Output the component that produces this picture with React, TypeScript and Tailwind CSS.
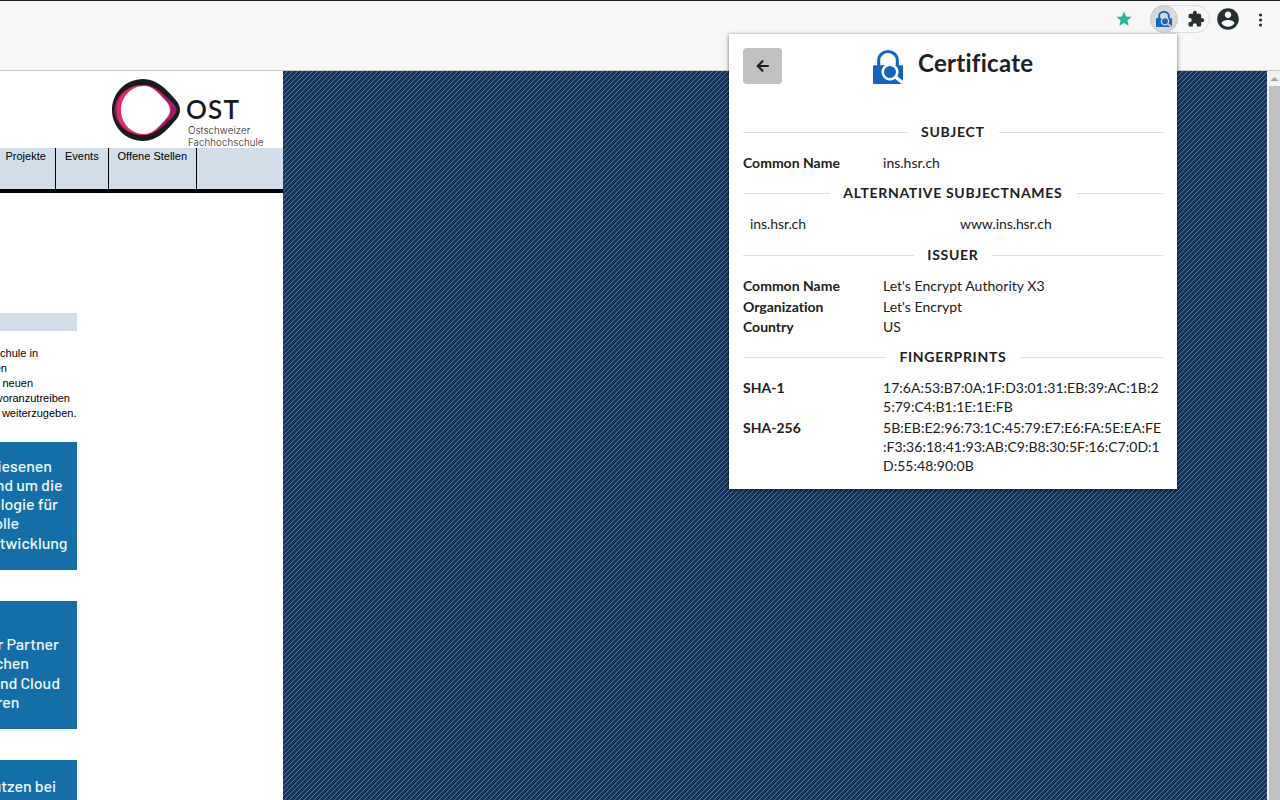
import React from "react";

const ARIAL = "font-['Liberation_Sans',Arial,sans-serif]";

function LockIcon({ className }: { className: string }) {
  return (
    <svg viewBox="0 0 30 34" className={className} fill="none">
      <path d="M5.700 17V10.200a9.300 8.700 0 0 1 18.600 0V17" stroke="#1565c0" strokeWidth="3" />
      <path d="M1 15.200H29a1 1 0 0 1 1 1V34H1a1 1 0 0 1-1-1V16.200a1 1 0 0 1 1-1Z" fill="#1565c0" />
      <circle cx="17" cy="22" r="7.300" stroke="#fff" strokeWidth="2.600" />
      <path d="M22.500 27L30 33" stroke="#fff" strokeWidth="3.400" />
    </svg>
  );
}

function SmallLockIcon() {
  return (
    <svg viewBox="0 0 16 16" className="h-4 w-4" fill="none">
      <path d="M3.200 8V4.800a4.800 4 0 0 1 9.600 0V8" stroke="#1565c0" strokeWidth="1.800" />
      <path d="M0 7.200h16V16H0z" fill="#1565c0" />
      <circle cx="9" cy="10.300" r="3.600" stroke="#d9d9d9" strokeWidth="1.300" />
      <path d="M11.700 12.800L15.500 15.800" stroke="#d9d9d9" strokeWidth="1.500" />
    </svg>
  );
}

function Toolbar() {
  return (
    <header className="flex h-[71px] shrink-0 items-start justify-end border-t border-b border-t-[#1c2022] border-b-[#c9c9c7] bg-[#f7f7f7] pt-1">
      <svg viewBox="0 0 24 24" className="mt-[5px] mr-[17px] h-[18px] w-[18px]" fill="#2db59a">
        <path d="M12 17.270 18.180 21l-1.640-7.030L22 9.240l-7.190-.61L12 2 9.190 8.630 2 9.240l5.460 4.730L5.820 21z" />
      </svg>
      <div className="flex h-7 w-[60px] items-center rounded-full border border-[#dddddd]">
        <div className="-ml-px flex h-7 w-7 items-center justify-center rounded-full border border-[#cbcbcb] bg-[#d9d9d9]">
          <SmallLockIcon />
        </div>
        <svg viewBox="0 0 24 24" className="ml-[9px] h-[18px] w-[18px]" fill="#263033">
          <path d="M20.500 11H19V7c0-1.100-.9-2-2-2h-4V3.500C13 2.120 11.880 1 10.500 1S8 2.120 8 3.500V5H4c-1.100 0-1.990.9-1.990 2v3.800H3.500c1.490 0 2.700 1.210 2.700 2.700s-1.210 2.700-2.700 2.700H2V20c0 1.100.9 2 2 2h3.800v-1.500c0-1.490 1.210-2.700 2.700-2.700 1.490 0 2.700 1.210 2.700 2.700V22H17c1.100 0 2-.9 2-2v-4h1.500c1.380 0 2.500-1.120 2.500-2.500S21.880 11 20.500 11z" />
        </svg>
      </div>
      <svg viewBox="0 0 24 24" className="mt-px ml-[5px] h-[26px] w-[26px]" fill="#263033">
        <path d="M12 2C6.480 2 2 6.480 2 12s4.480 10 10 10 10-4.480 10-10S17.520 2 12 2zm0 3c1.660 0 3 1.340 3 3s-1.340 3-3 3-3-1.340-3-3 1.340-3 3-3zm0 14.200c-2.500 0-4.710-1.280-6-3.220.03-1.990 4-3.080 6-3.080 1.990 0 5.970 1.090 6 3.080-1.290 1.940-3.500 3.220-6 3.220z" />
      </svg>
      <svg viewBox="0 0 4 16" className="mt-[6.500px] mr-[17.500px] ml-[17.500px] h-4 w-1" fill="#263033">
        <circle cx="1.600" cy="3" r="1.600" />
        <circle cx="1.600" cy="8" r="1.600" />
        <circle cx="1.600" cy="13" r="1.600" />
      </svg>
    </header>
  );
}

function OstLogo() {
  return (
    <div className="flex h-[77px] pt-2 pl-[112px]">
      <svg viewBox="0 0 68 62" className="h-[62px] w-[68px] shrink-0">
        <path d="M31 0C13.900 0 0 13.900 0 31S13.900 62 31 62C45 62 54 52 62 43C70 35 70 27 62 19C54 10 45 0 31 0Z" fill="#1a1a1a" />
        <path d="M31 6C15 6 2.500 17 2.500 31S15 56 31 56C43 56 51 48 59 40C66.500 33 66.500 29 59 22C51 14 43 6 31 6Z" fill="#8e1c5f" />
        <path d="M31 6C16 6 4.500 17 4.500 31S16 56 31 56C42 56 47 49 54 41C61 34 61 28 54 21C47 13 42 6 31 6Z" fill="#e22b69" />
        <path d="M57 22C64 29 64 33 57 40" stroke="#b43886" strokeWidth="0.800" fill="none" />
        <path d="M32 7C19 7 9 18 9 31S19 55 32 55C41 55 46 48 53 41C59.500 34 59.500 28 53 21C46 14 41 7 32 7Z" fill="#fff" />
      </svg>
      <div className="pt-[17px] pl-[6px] text-[#1a1a1a]">
        <div className="font-[Lato,sans-serif] text-[26px] leading-[27px] font-semibold tracking-[1.200px]">OST</div>
        <div className="mt-[2px] pl-[2px] font-[Inter,sans-serif] text-[9.700px] leading-[11.500px] font-light tracking-[0.100px] text-[#222]">
          Ostschweizer
          <br />
          Fachhochschule
        </div>
      </div>
    </div>
  );
}

function Nav() {
  return (
    <nav className={`flex h-[45px] border-b-4 border-black bg-[#d1dee9] text-[11px] leading-[17px] text-black ${ARIAL}`}>
      <div className="w-14 border-r border-black pl-[5.500px]">Projekte</div>
      <div className="w-[53px] border-r border-black pl-[9px]">Events</div>
      <div className="w-[88px] border-r border-black pl-[8.500px] whitespace-nowrap">Offene Stellen</div>
    </nav>
  );
}

function Line({ w, children }: { w: string; children: React.ReactNode }) {
  return <div className={`flex justify-end overflow-hidden whitespace-nowrap ${w}`}>{children}</div>;
}

const CARD = "w-[77px] bg-[#146fa9] font-[Barlow,Roboto,sans-serif] text-[16px] leading-[19.300px] font-medium tracking-[-0.040px] text-[#f1f6fa]";

function Site() {
  return (
    <main className="h-full w-[283px] shrink-0 overflow-hidden bg-white">
      <OstLogo />
      <Nav />
      <div className="mt-[120px] h-[18px] w-[77px] bg-[#d1dee9]" />
      <div className={`mt-[15px] text-[11px] leading-[15px] text-black ${ARIAL}`}>
        <Line w="w-[38px]">schule in</Line>
        <Line w="w-[7px]">en</Line>
        <Line w="w-[33px]">neuen</Line>
        <Line w="w-[70px]">voranzutreiben</Line>
        <Line w="w-[76.500px]">weiterzugeben.</Line>
      </div>
      <div className={`mt-[21px] h-32 pt-[13.600px] ${CARD}`}>
        <Line w="w-[52px]">wiesenen</Line>
        <Line w="w-[62.500px]">rund um die</Line>
        <Line w="w-[58px]">nologie für</Line>
        <Line w="w-[19px]">volle</Line>
        <Line w="w-[67.500px]">Entwicklung</Line>
      </div>
      <div className={`mt-[31px] h-32 pt-[33px] ${CARD}`}>
        <Line w="w-[59px]">er Partner</Line>
        <Line w="w-[29px]">ischen</Line>
        <Line w="w-[60px]">und Cloud</Line>
        <Line w="w-[19.500px]">eren</Line>
      </div>
      <div className={`mt-[31px] h-32 pt-4 ${CARD}`}>
        <Line w="w-[56px]">nutzen bei</Line>
      </div>
    </main>
  );
}

function Backdrop() {
  return (
    <svg className="h-full min-w-0 flex-1" shapeRendering="crispEdges">
      <defs>
        <pattern id="hatch" width="5" height="5" patternUnits="userSpaceOnUse">
          <rect width="5" height="5" fill="#14355d" />
          <path d="M4 0h1v1h-1zM3 1h1v1h-1zM2 2h1v1h-1zM1 3h1v1h-1zM0 4h1v1h-1z" fill="#597795" />
        </pattern>
      </defs>
      <rect width="100%" height="100%" fill="url(#hatch)" />
    </svg>
  );
}

function Heading({ children }: { children: React.ReactNode }) {
  return (
    <div className="flex h-5 items-center gap-[14px] text-[14px] font-bold tracking-[0.680px] uppercase">
      <span className="h-px flex-1 bg-[#dedede]" />
      <span className="-ml-[0.300px] pb-[2px]">{children}</span>
      <span className="h-px flex-1 bg-[#dedede]" />
    </div>
  );
}

function Row({ label, value }: { label: string; value: string }) {
  return (
    <div className="flex pb-[1.500px] leading-[19px]">
      <div className="w-[140px] shrink-0 font-bold">{label}</div>
      <div className="w-[280px] shrink-0 tracking-[0.020px] break-all [line-break:anywhere]">{value}</div>
    </div>
  );
}

function Popup() {
  return (
    <section className="absolute top-[34px] left-[729px] h-[455px] w-[448px] bg-white px-[14px] pt-[14px] font-[Lato,sans-serif] text-[14px] text-[#212121] shadow-[0_1px_4px_rgba(0,0,0,0.6)] [font-variant-ligatures:none]">
      <div className="flex h-[74px] items-start">
        <button className="flex h-9 w-[39px] items-center justify-center rounded-[4px] bg-[#c0c1c2]">
          <svg viewBox="0 0 14 14" className="h-[14px] w-[14px]" fill="none" stroke="#1d1e1f" strokeWidth="2.100" strokeLinecap="round">
            <path d="M12 7H2M6.500 2.200L1.700 7l4.800 4.800" />
          </svg>
        </button>
        <LockIcon className="mt-[2px] ml-[91px] h-[34px] w-[30px]" />
        <h1 className="ml-[15px] text-[24px] leading-[30px] font-bold tracking-[0.280px]">Certificate</h1>
      </div>
      <Heading>Subject</Heading>
      <div className="mt-[11px]">
        <Row label="Common Name" value="ins.hsr.ch" />
      </div>
      <div className="mt-[9.500px]">
        <Heading>Alternative Subjectnames</Heading>
      </div>
      <div className="mt-[11px] flex h-[21px] leading-[19px] tracking-[-0.080px]">
        <div className="w-[210px] pl-[7px]">ins.hsr.ch</div>
        <div className="w-[210px] pl-[7px]">www.ins.hsr.ch</div>
      </div>
      <div className="mt-[10px]">
        <Heading>Issuer</Heading>
      </div>
      <div className="mt-[11px]">
        <Row label="Common Name" value="Let's Encrypt Authority X3" />
        <Row label="Organization" value="Let's Encrypt" />
        <Row label="Country" value="US" />
      </div>
      <div className="mt-[9.500px]">
        <Heading>Fingerprints</Heading>
      </div>
      <div className="mt-[11px]">
        <Row label="SHA-1" value="17:6A:53:B7:0A:1F:D3:01:31:EB:39:AC:1B:25:79:C4:B1:1E:1E:FB" />
        <Row label="SHA-256" value="5B:EB:E2:96:73:1C:45:79:E7:E6:FA:5E:EA:FE:F3:36:18:41:93:AB:C9:B8:30:5F:16:C7:0D:1D:55:48:90:0B" />
      </div>
    </section>
  );
}

export default function App() {
  return (
    <div className="relative flex h-[800px] w-[1280px] flex-col overflow-hidden bg-white">
      <Toolbar />
      <div className="flex min-h-0 flex-1">
        <Site />
        <Backdrop />
        <div className="flex w-[13px] shrink-0 flex-col items-center bg-[#f1f1f1]">
          <svg viewBox="0 0 13 15" className="h-[15px] w-[13px] shrink-0" fill="#a0a0a0">
            <path d="M3.500 10L7.500 6l4 4z" />
          </svg>
          <div className="ml-[2px] w-[11px] flex-1 bg-[#c1c1c1]" />
        </div>
      </div>
      <Popup />
    </div>
  );
}
